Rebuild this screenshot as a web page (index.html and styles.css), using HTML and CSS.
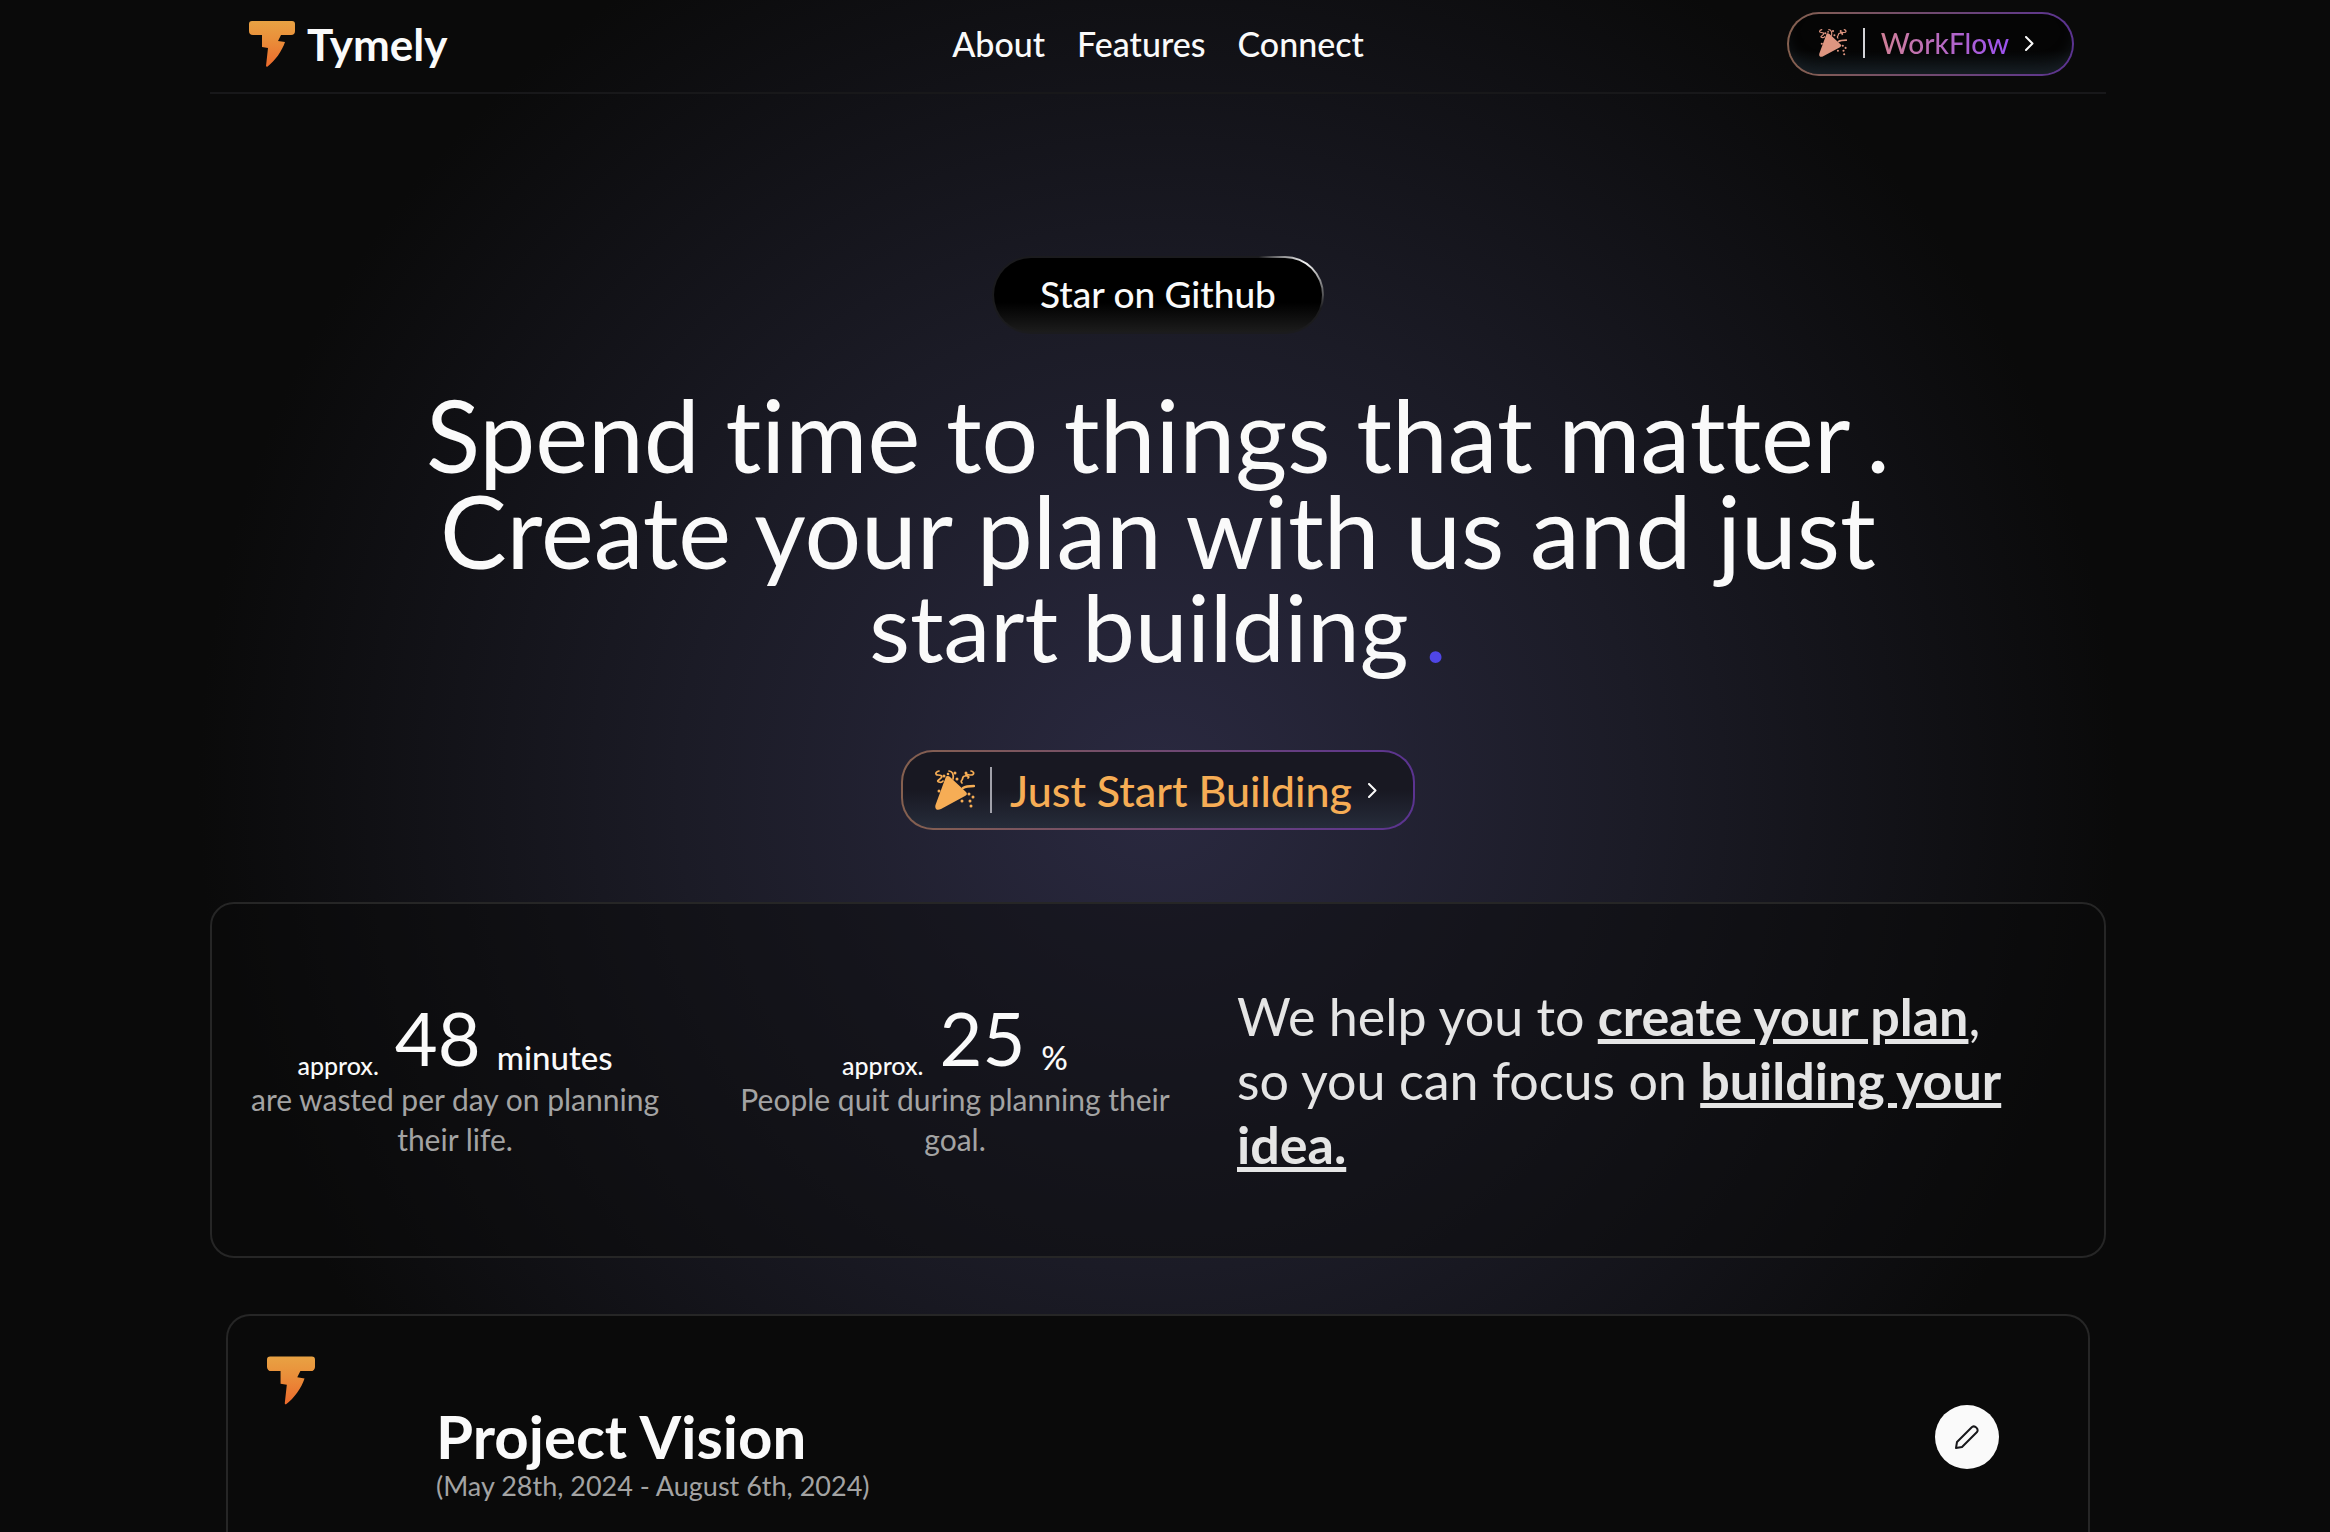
FILE: index.html
```html
<!DOCTYPE html>
<html lang="en">
<head>
<meta charset="utf-8">
<title>Tymely</title>
<link rel="stylesheet" href="styles.css">
</head>
<body>
<svg class="defs" width="0" height="0" aria-hidden="true">
    <defs>
        <linearGradient id="bolt" x1="0" y1="0" x2="0" y2="1">
            <stop offset="0" stop-color="#e8a243"/>
            <stop offset="0.4" stop-color="#ea8f3a"/>
            <stop offset="1" stop-color="#ec6a2c"/>
        </linearGradient>
        <symbol id="logo" viewBox="0 0 46 46">
            <path fill="url(#bolt)" d="M3 0h40a3 3 0 0 1 3 3v7a4 4 0 0 1-4 4H32l-3 6 7 1c-3 9-10 19-18 25l-1-1 2-18-6-1V14H4a4 4 0 0 1-4-4V3a3 3 0 0 1 3-3z"/>
        </symbol>
        <symbol id="party" viewBox="0 0 40 40">
            <path fill="currentColor" d="M11 6.500c1-1 3-.5 4 .5l16 15c1.500 1.500 1 3-1 4L6 39c-4 2-6.500 0-5.500-4z"/>
            <g fill="none" stroke="currentColor" stroke-width="1.700" stroke-linecap="round" stroke-linejoin="round">
                <path d="M4 1C0 2 0 5 3 5s5 1 3 3-5 3-2 4 3 0 4-1"/>
                <path d="M14 1c3 0 5 3 4 8"/>
                <path d="M36 1c4 1 3 4 0 4s-3-1-5 0 5 1 2 3M30 6c-3 0-2 3-3 4s-1 2 0 3"/>
                <path d="M28 18c3-2 6-2 11-2" stroke-width="2.500"/>
            </g>
            <g fill="currentColor">
                <circle cx="9" cy="6" r="1.500"/><circle cx="13" cy="4" r="1.300"/><circle cx="20" cy="3" r="1.500"/>
                <circle cx="22" cy="9" r="1.500"/><circle cx="31" cy="3" r="1.500"/><circle cx="4" cy="21" r="1.500"/>
                <circle cx="34" cy="24" r="1.500"/><circle cx="38" cy="27" r="1.500"/><circle cx="27" cy="31" r="1.500"/>
                <circle cx="35" cy="31" r="1.500"/><circle cx="36" cy="36" r="1.500"/>
            </g>
        </symbol>
        <symbol id="chevron" viewBox="0 0 9 15">
            <path fill="none" stroke="currentColor" stroke-width="2" stroke-linecap="round" stroke-linejoin="round" d="M1 1l6.500 6.500L1 14"/>
        </symbol>
    </defs>
</svg>

<header class="header">
    <a class="brand" href="#"><svg class="logo"><use href="#logo"/></svg>Tymely</a>
    <nav class="nav">
        <a href="#about">About</a>
        <a href="#features">Features</a>
        <a href="#connect">Connect</a>
    </nav>
    <button class="pill pill-small" type="button">
        <svg class="party"><use href="#party"/></svg>
        <span class="bar"></span>
        <span class="label">WorkFlow</span>
        <svg class="chevron"><use href="#chevron"/></svg>
    </button>
</header>

<main>
    <section class="hero">
        <button class="github" type="button">Star on Github</button>
        <h1>
            <span>Spend time to things that matter<i>.</i></span>
            <span>Create your plan with us and just</span>
            <span class="last">start building<i class="dot">.</i></span>
        </h1>
        <button class="pill pill-large" type="button">
            <svg class="party"><use href="#party"/></svg>
            <span class="bar"></span>
            <span class="label">Just Start Building</span>
            <svg class="chevron"><use href="#chevron"/></svg>
        </button>
    </section>

    <section class="stats">
        <div class="stat">
            <p class="figure"><small>approx.</small><strong>48</strong><span>minutes</span></p>
            <p class="note">are wasted per day on planning their life.</p>
        </div>
        <div class="stat">
            <p class="figure"><small>approx.</small><strong>25</strong><span>%</span></p>
            <p class="note">People quit during planning their goal.</p>
        </div>
        <p class="pitch">We help you to <b>create your plan</b>,<br>so you can focus on <b>building your idea.</b></p>
    </section>

    <section class="project">
        <svg class="logo"><use href="#logo"/></svg>
        <div class="project-head">
            <div>
                <h2>Project Vision</h2>
                <p>(May 28th, 2024 - August 6th, 2024)</p>
            </div>
            <button class="edit" type="button" aria-label="Edit">
                <svg viewBox="0 0 24 24"><path d="M1 23l1-6L17 2c3-2 7 2 5 5L7 22z"/></svg>
            </button>
        </div>
    </section>
</main>
</body>
</html>
```
FILE: styles.css
```css
* {
    box-sizing: border-box;
    margin: 0;
}
body {
    display: flex;
    flex-direction: column;
    height: 100vh;
    overflow: hidden;
    padding-right: 14px;
    font-family: Lato, sans-serif;
    font-variant-ligatures: none;
    color: #fafafa;
    background: #0a0a0a radial-gradient(circle 960px at calc(50% - 7px) 790px, #2a2940, #1b1b26 50%, #0a0a0a);
}
button {
    font-family: inherit;
    border: 0;
    cursor: pointer;
}
.defs {
    position: absolute;
}
.header {
    display: grid;
    grid-template-columns: 1fr auto 1fr;
    align-items: center;
    width: 100%;
    max-width: 1896px;
    height: 94px;
    margin: 0 auto;
    padding: 0 32px 4px;
    border-bottom: 2px solid #18181a;
}
.brand {
    display: flex;
    align-items: center;
    gap: 12px;
    padding-left: 7px;
    font-size: 44px;
    font-weight: 700;
    line-height: 48px;
    color: inherit;
    text-decoration: none;
}
.brand .logo {
    width: 46px;
    height: 46px;
}
.nav {
    display: flex;
    gap: 32px;
    padding-bottom: 2px;
}
.nav a {
    font-size: 34px;
    font-weight: 500;
    color: inherit;
    text-decoration: none;
}
.pill {
    display: flex;
    align-items: center;
    color: #f6ad55;
    border: 2px solid transparent;
}
.pill .bar {
    width: 2px;
    background: #d4d4d8;
}
.pill .chevron {
    width: 9px;
    height: 15px;
    color: #fafafa;
}
.pill-small {
    justify-self: end;
    height: 64px;
    padding: 0 38px 2px 30px;
    border-radius: 32px;
    font-size: 28px;
    font-weight: 500;
    box-shadow: inset 0 -12px 16px -8px #182026;
    background:
        linear-gradient(#050505 60%, #12181c) padding-box,
        linear-gradient(90deg, #85604f, #5b3391) border-box;
}
.pill-small .party {
    width: 28px;
    height: 28px;
    margin-right: 16px;
    color: #de9580;
}
.pill-small .bar {
    height: 30px;
    margin-right: 16px;
}
.pill-small .label {
    margin-right: 16px;
    color: transparent;
    background: linear-gradient(90deg, #d07f97, #9b51f0);
    background-clip: text;
}
.hero {
    display: flex;
    flex-direction: column;
    align-items: center;
    padding-top: 162px;
}
.github {
    width: 332px;
    height: 78px;
    padding-bottom: 4px;
    border-radius: 39px;
    font-size: 37px;
    font-weight: 500;
    color: #fafafa;
    border: 2px solid transparent;
    background:
        linear-gradient(#000 60%, #1c1c1c) padding-box,
        radial-gradient(circle at 94% 12%, #fff, #1b1b1e 46px) border-box;
}
h1 {
    margin: 52px 0 76px;
    font-size: 100px;
    font-weight: 400;
    line-height: 96px;
    text-align: center;
}
h1 span {
    display: block;
}
h1 i {
    margin-left: 16px;
    font-style: normal;
}
h1 .last {
    font-size: 94px;
}
h1 .dot {
    color: #4f46e5;
}
.pill-large {
    height: 80px;
    padding: 0 36px 0 32px;
    border-radius: 32px;
    font-size: 43px;
    font-weight: 500;
    background:
        linear-gradient(#181822 50%, #262c3a) padding-box,
        linear-gradient(90deg, #85604f, #5b3391) border-box;
}
.pill-large .party {
    width: 40px;
    height: 40px;
    margin-right: 15px;
}
.pill-large .bar {
    height: 46px;
    margin-right: 18px;
    background: #a1a1aa;
}
.pill-large .label {
    margin-right: 16px;
}
.stats {
    display: grid;
    grid-template-columns: 436fr 436fr 837fr;
    column-gap: 64px;
    align-items: center;
    max-width: 1896px;
    min-height: 356px;
    margin: 72px auto 56px;
    padding: 0 30px 0 25px;
    border: 2px solid #262626;
    border-radius: 24px;
    background: rgba(10, 10, 10, 0.5);
}
.stat {
    text-align: center;
}
.figure {
    display: flex;
    align-items: flex-end;
    justify-content: center;
    gap: 16px;
    font-weight: 500;
}
.figure small {
    font-size: 25px;
    line-height: 18px;
}
.figure strong {
    font-size: 74px;
    font-weight: 400;
    line-height: 72px;
}
.figure span {
    font-size: 33px;
    line-height: 34px;
}
.note {
    margin-top: 5px;
    font-size: 30px;
    line-height: 40px;
    color: #a3a3a3;
}
.pitch {
    font-size: 52px;
    line-height: 64px;
    color: #e5e5e5;
}
.pitch b {
    text-decoration: underline;
}
main {
    display: flex;
    flex: 1;
    flex-direction: column;
}
.stats,
.project {
    width: 100%;
}
.project {
    flex: 1;
    max-width: 1864px;
    margin: 0 auto;
    padding: 40px 89px 0 39px;
    border: 2px solid #262626;
    border-bottom: 0;
    border-radius: 24px 24px 0 0;
    background: #0a0a0a;
}
.project > .logo {
    display: block;
    width: 48px;
    height: 49px;
}
.project-head {
    display: flex;
    align-items: flex-start;
    justify-content: space-between;
    padding-left: 169px;
}
h2 {
    font-size: 60px;
    line-height: 62px;
}
.project p {
    font-size: 27px;
    line-height: 38px;
    color: #a3a3a3;
}
.edit {
    width: 64px;
    height: 64px;
    padding: 20px;
    border-radius: 50%;
    background: #fafafa;
}
.edit svg {
    display: block;
    fill: none;
    stroke: #18181b;
    stroke-width: 2;
    stroke-linejoin: round;
}
```
